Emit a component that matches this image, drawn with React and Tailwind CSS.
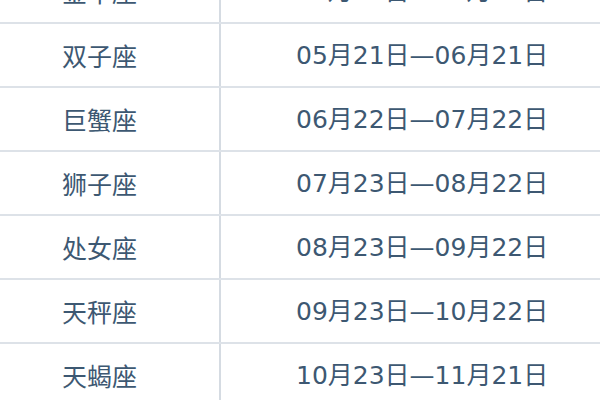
const rows = [
  ["金牛座", "04月21日—05月20日"],
  ["双子座", "05月21日—06月21日"],
  ["巨蟹座", "06月22日—07月22日"],
  ["狮子座", "07月23日—08月22日"],
  ["处女座", "08月23日—09月22日"],
  ["天秤座", "09月23日—10月22日"],
  ["天蝎座", "10月23日—11月21日"],
];

export default function App() {
  return (
    <div
      className="w-[600px] h-[400px] overflow-hidden bg-white text-[#3d5872]"
      style={{ fontFamily: '"Noto Sans CJK SC", "Noto Sans", sans-serif' }}
    >
      <div className="-mt-[40px]">
        {rows.map(([name, date]) => (
          <div key={name} className="flex h-[64px] border-b-2 border-[#dde2e8]">
            <div className="w-[221px] border-r-2 border-[#d5dbe2] flex items-center pl-[62px] text-[25px] leading-none">
              {name}
            </div>
            <div
              className="flex-1 flex items-center pl-[75px] text-[25px] leading-none"
              style={{ fontFamily: '"DejaVu Sans", "Noto Sans CJK SC", sans-serif' }}
            >
              {date}
            </div>
          </div>
        ))}
      </div>
    </div>
  );
}
